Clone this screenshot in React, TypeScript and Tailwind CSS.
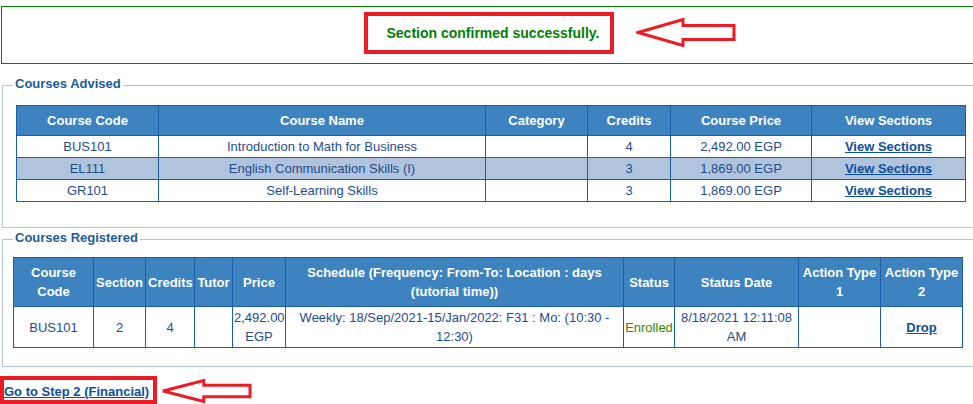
import React from "react";

const advised = [
  { code: "BUS101", name: "Introduction to Math for Business", credits: "4", price: "2,492.00 EGP" },
  { code: "EL111", name: "English Communication Skills (I)", credits: "3", price: "1,869.00 EGP" },
  { code: "GR101", name: "Self-Learning Skills", credits: "3", price: "1,869.00 EGP" },
];

const advisedCols = [142, 327, 102, 83, 141, 154];
const registeredCols = [80, 52, 49, 38, 53, 338, 51, 124, 82, 82];

const th =
  "border border-[#1a5ea8] bg-[#3d83bf] text-white font-bold text-[13px] leading-[19px] py-[5px] px-[2px] text-center";
const td =
  "border border-[#1a5ea8] text-[#1e4d8c] text-[13px] leading-[19px] py-[1px] px-[1px] text-center";
const link = "text-[#0b4f9e] font-bold underline";

function Arrow({ w, h }: { w: number; h: number }) {
  // outline arrow pointing left, used as annotation
  const mid = h / 2;
  const head = w * 0.47;
  const shaft = h * 0.24;
  const pts = [
    [2, mid],
    [head, 1.5],
    [head, mid - shaft],
    [w - 2, mid - shaft],
    [w - 2, mid + shaft],
    [head, mid + shaft],
    [head, h - 1.5],
  ]
    .map((p) => p.join(","))
    .join(" ");
  return (
    <svg width={w} height={h} viewBox={`0 0 ${w} ${h}`}>
      <polygon points={pts} fill="white" stroke="#ed1c24" strokeWidth="3" strokeLinejoin="miter" />
    </svg>
  );
}

export default function App() {
  return (
    <div className="w-[973px] h-[404px] overflow-hidden bg-white font-['Liberation_Sans',Arial,sans-serif]">
      <div className="w-[1000px]">
        {/* success message */}
        <div className="ml-[1px] mt-[6px] w-[975px] h-[58px] border border-[#008000] flex justify-center items-start">
          <div className="relative mt-[5px] w-[250px] h-[42px] border-4 border-[#ed1c24] flex items-center pl-[19px]">
            <span className="text-[#008000] font-bold text-[14px] leading-[17px]">
              Section confirmed successfully.
            </span>
            <div className="absolute left-[268px] top-[2px]">
              <Arrow w={100} h={29} />
            </div>
          </div>
        </div>

        {/* Courses Advised */}
        <fieldset className="mt-[12px] ml-[2px] w-[990px] border border-[#b0c4de] pl-[10px] pb-[25px]">
          <legend className="px-[2px] pb-[4px] text-[13px] leading-[15px] font-bold text-[#1c5a9c]">
            Courses Advised
          </legend>
          <table className="ml-[3px] mt-[10px] w-[950px] table-fixed border-collapse">
            <colgroup>
              {advisedCols.map((c, i) => (
                <col key={i} style={{ width: c }} />
              ))}
            </colgroup>
            <thead>
              <tr>
                <th className={th}>Course Code</th>
                <th className={th}>Course Name</th>
                <th className={th}>Category</th>
                <th className={th}>Credits</th>
                <th className={th}>Course Price</th>
                <th className={th}>View Sections</th>
              </tr>
            </thead>
            <tbody>
              {advised.map((r, i) => (
                <tr key={r.code} className={i === 1 ? "bg-[#b0c4de]" : "bg-white"}>
                  <td className={td}>{r.code}</td>
                  <td className={td}>{r.name}</td>
                  <td className={td}></td>
                  <td className={td}>{r.credits}</td>
                  <td className={td}>{r.price}</td>
                  <td className={td}>
                    <a href="#" className={link}>
                      View Sections
                    </a>
                  </td>
                </tr>
              ))}
            </tbody>
          </table>
        </fieldset>

        {/* Courses Registered */}
        <fieldset className="mt-[2px] ml-[2px] w-[990px] border border-[#b0c4de] pl-[10px] pb-[18px]">
          <legend className="px-[2px] pb-[4px] text-[13px] leading-[15px] font-bold text-[#1c5a9c]">
            Courses Registered
          </legend>
          <table className="mt-[8px] w-[950px] table-fixed border-collapse">
            <colgroup>
              {registeredCols.map((c, i) => (
                <col key={i} style={{ width: c }} />
              ))}
            </colgroup>
            <thead>
              <tr>
                <th className={th}>Course Code</th>
                <th className={th}>Section</th>
                <th className={th}>Credits</th>
                <th className={th}>Tutor</th>
                <th className={th}>Price</th>
                <th className={th}>Schedule (Frequency: From-To: Location : days (tutorial time))</th>
                <th className={th}>Status</th>
                <th className={th}>Status Date</th>
                <th className={th}>Action Type 1</th>
                <th className={th}>Action Type 2</th>
              </tr>
            </thead>
            <tbody>
              <tr>
                <td className={td}>BUS101</td>
                <td className={td}>2</td>
                <td className={td}>4</td>
                <td className={td}></td>
                <td className={td}>2,492.00 EGP</td>
                <td className={td}>Weekly: 18/Sep/2021-15/Jan/2022: F31 : Mo: (10:30 - 12:30)</td>
                <td className={`${td} !text-[#2f8a00]`}>Enrolled</td>
                <td className={td}>8/18/2021 12:11:08 AM</td>
                <td className={td}></td>
                <td className={td}>
                  <a href="#" className={link}>
                    Drop
                  </a>
                </td>
              </tr>
            </tbody>
          </table>
        </fieldset>

        {/* next step link */}
        <div className="mt-[9px] flex items-start">
          <div className="border-4 border-[#ed1c24] pt-[3px] pr-[4px] h-[28px]">
            <a href="#" className={`${link} text-[13px] leading-[17px] block`}>
              Go to Step 2 (Financial)
            </a>
          </div>
          <div className="ml-[4px] mt-[3px]">
            <Arrow w={91} h={24} />
          </div>
        </div>
      </div>
    </div>
  );
}
